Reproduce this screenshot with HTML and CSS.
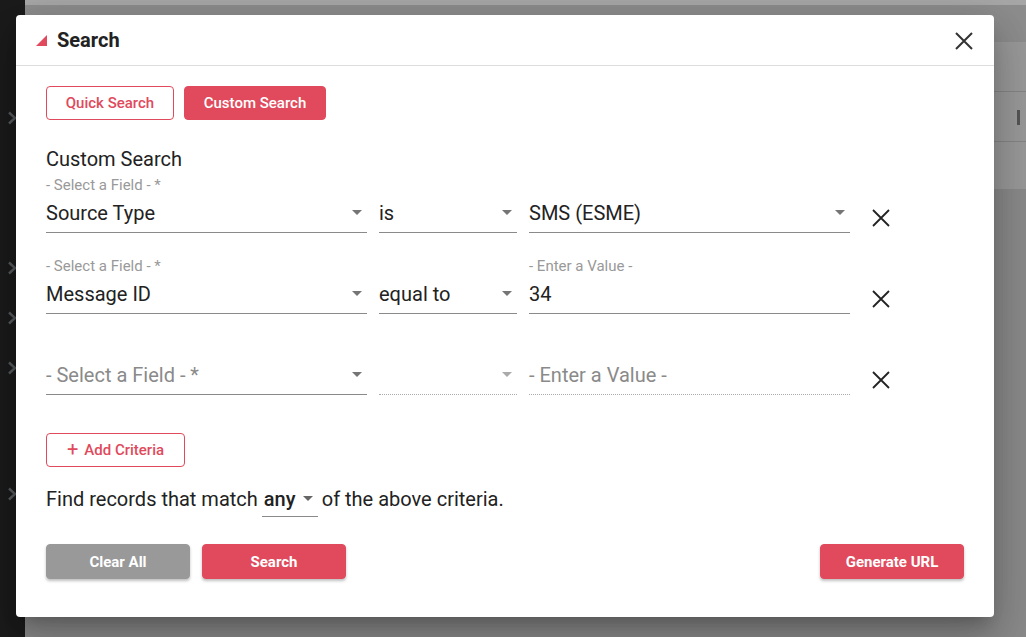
FILE: index.html
```html
<!DOCTYPE html>
<html lang="en">
<head>
<meta charset="utf-8">
<title>Search</title>
<link rel="stylesheet" href="styles.css">
</head>
<body>
<div class="app">
  <nav class="sidebar">
    <svg class="chev c1" width="10" height="14" viewBox="0 0 10 14"><polyline points="2,1.5 8,7 2,12.5" fill="none" stroke="#565b5f" stroke-width="2.4"/></svg>
    <svg class="chev c2" width="10" height="14" viewBox="0 0 10 14"><polyline points="2,1.5 8,7 2,12.5" fill="none" stroke="#565b5f" stroke-width="2.4"/></svg>
    <svg class="chev c3" width="10" height="14" viewBox="0 0 10 14"><polyline points="2,1.5 8,7 2,12.5" fill="none" stroke="#565b5f" stroke-width="2.4"/></svg>
    <svg class="chev c4" width="10" height="14" viewBox="0 0 10 14"><polyline points="2,1.5 8,7 2,12.5" fill="none" stroke="#565b5f" stroke-width="2.4"/></svg>
    <svg class="chev c5" width="10" height="14" viewBox="0 0 10 14"><polyline points="2,1.5 8,7 2,12.5" fill="none" stroke="#565b5f" stroke-width="2.4"/></svg>
  </nav>
  <main class="page">
    <div class="strip"></div>
    <div class="topbar"></div>
    <div class="band"></div>
    <div class="band band-tool"><span class="first-icon"></span></div>
    <div class="band band-last"></div>
    <div class="rest"></div>
  </main>
</div>

<div class="modal" role="dialog" aria-label="Search">
  <header class="modal-head">
    <span class="corner"></span>
    <h1 class="modal-title">Search</h1>
    <button class="close" aria-label="Close">
      <svg width="20" height="20" viewBox="0 0 20 20"><path d="M2 2 L18 18 M18 2 L2 18" stroke="#333" stroke-width="2" fill="none"/></svg>
    </button>
  </header>
  <section class="modal-body">
    <div class="tabs">
      <button class="btn btn-outline">Quick Search</button>
      <button class="btn btn-fill">Custom Search</button>
    </div>
    <h2 class="section-title">Custom Search</h2>

    <div class="criteria">
      <div class="field">
        <label class="lbl">- Select a Field - *</label>
        <div class="input select"><span class="val">Source Type</span><span class="caret"></span></div>
      </div>
      <div class="field">
        <label class="lbl">&nbsp;</label>
        <div class="input select"><span class="val">is</span><span class="caret"></span></div>
      </div>
      <div class="field">
        <label class="lbl">&nbsp;</label>
        <div class="input select"><span class="val">SMS (ESME)</span><span class="caret"></span></div>
      </div>
      <div class="remove"><svg width="20" height="20" viewBox="0 0 20 20"><path d="M2 2 L18 18 M18 2 L2 18" stroke="#222" stroke-width="1.8" fill="none"/></svg></div>

      <div class="field">
        <label class="lbl">- Select a Field - *</label>
        <div class="input select"><span class="val">Message ID</span><span class="caret"></span></div>
      </div>
      <div class="field">
        <label class="lbl">&nbsp;</label>
        <div class="input select"><span class="val">equal to</span><span class="caret"></span></div>
      </div>
      <div class="field">
        <label class="lbl">- Enter a Value -</label>
        <div class="input"><span class="val">34</span></div>
      </div>
      <div class="remove"><svg width="20" height="20" viewBox="0 0 20 20"><path d="M2 2 L18 18 M18 2 L2 18" stroke="#222" stroke-width="1.8" fill="none"/></svg></div>

      <div class="field">
        <label class="lbl">&nbsp;</label>
        <div class="input select"><span class="val ph">- Select a Field - *</span><span class="caret"></span></div>
      </div>
      <div class="field">
        <label class="lbl">&nbsp;</label>
        <div class="input select dotted"><span class="val"></span><span class="caret light"></span></div>
      </div>
      <div class="field">
        <label class="lbl">&nbsp;</label>
        <div class="input dotted"><span class="val ph">- Enter a Value -</span></div>
      </div>
      <div class="remove"><svg width="20" height="20" viewBox="0 0 20 20"><path d="M2 2 L18 18 M18 2 L2 18" stroke="#222" stroke-width="1.8" fill="none"/></svg></div>
    </div>

    <button class="btn btn-outline btn-add"><span class="plus">+</span>Add Criteria</button>

    <p class="match">Find records that match <span class="any"><span class="any-val">any</span><span class="caret"></span></span> of the above criteria.</p>

    <div class="actions">
      <button class="btn btn-gray raised">Clear All</button>
      <button class="btn btn-fill raised">Search</button>
      <span class="spacer"></span>
      <button class="btn btn-fill raised">Generate URL</button>
    </div>
  </section>
</div>
</body>
</html>
```
FILE: styles.css
```css
* { box-sizing: border-box; }
html, body { margin: 0; padding: 0; }
body {
  width: 1026px;
  height: 637px;
  overflow: hidden;
  font-family: Roboto, "Liberation Sans", Arial, sans-serif;
  color: #222;
  position: relative;
  background: #8b8b8b;
}
.app { display: flex; height: 637px; }
.sidebar {
  width: 25px;
  flex: none;
  background: #1b1b1b;
  display: flex;
  flex-direction: column;
}
.chev {
  display: block;
  flex: none;
  margin-left: 7px;
}
.c1 { margin-top: 111px; }
.c2 { margin-top: 136px; }
.c3 { margin-top: 36px; }
.c4 { margin-top: 36px; }
.c5 { margin-top: 112px; }

.page { flex: 1; display: flex; flex-direction: column; }
.strip { height: 5px; background: #a7a7a7; }
.topbar { height: 37px; background: #8d8d8d; }
.band { height: 50px; background: #999; border-bottom: 1px solid #858585; position: relative; }
.band-last { height: 47px; border-bottom: 0; }
.first-icon {
  position: absolute;
  right: 6px;
  top: 18px;
  width: 3px;
  height: 15px;
  background: #555;
}
.rest { flex: 1; background: #8a8a8a; }

.modal {
  position: absolute;
  left: 16px;
  top: 15px;
  width: 978px;
  height: 602px;
  background: #fff;
  border-radius: 4px;
  box-shadow: 0 11px 15px -7px rgba(0,0,0,.2), 0 24px 38px 3px rgba(0,0,0,.14), 0 9px 46px 8px rgba(0,0,0,.12);
  display: flex;
  flex-direction: column;
}
.modal-head {
  height: 51px;
  border-bottom: 1px solid #dedede;
  display: flex;
  align-items: center;
  padding: 0 20px 0 20px;
  flex: none;
}
.corner {
  width: 0; height: 0;
  border-left: 11px solid transparent;
  border-bottom: 11px solid #e04a5c;
  margin-top: 1px;
}
.modal-title {
  margin: 0 0 0 10px;
  font-size: 20px;
  font-weight: 700;
  color: #222;
  line-height: 24px;
}
.close {
  margin-left: auto;
  background: none;
  border: 0;
  padding: 0;
  width: 20px;
  height: 20px;
  margin-right: 0;
  display: flex;
  margin-top: 2px;
}
.modal-body {
  padding: 20px 30px 0 30px;
  display: flex;
  flex-direction: column;
  align-items: flex-start;
}
.tabs { display: flex; gap: 10px; }
.btn {
  font-family: Roboto, "Liberation Sans", Arial, sans-serif;
  font-size: 15px;
  font-weight: 500;
  height: 34px;
  border-radius: 4px;
  padding: 0;
  cursor: pointer;
  line-height: 32px;
  text-align: center;
}
.btn-outline { background: #fff; border: 1px solid #e04a5c; color: #e04a5c; }
.btn-fill { background: #e04a5c; border: 1px solid #e04a5c; color: #fff; }
.btn-gray { background: #999; border: 1px solid #999; color: #fff; }
.tabs .btn-outline { width: 128px; }
.tabs .btn-fill { width: 142px; }

.section-title {
  margin: 27px 0 0 0;
  font-size: 20px;
  font-weight: 400;
  line-height: 24px;
  color: #222;
}
.criteria {
  display: grid;
  grid-template-columns: 321px 138px 321px 40px;
  column-gap: 12px;
  row-gap: 25px;
  margin-top: 6px;
  width: 100%;
}
.field { display: flex; flex-direction: column; }
.lbl {
  font-size: 15px;
  line-height: 16px;
  height: 16px;
  color: #999;
}
.input {
  height: 40px;
  border-bottom: 1px solid #8a8a8a;
  display: flex;
  align-items: center;
}
.input.dotted { border-bottom: 1px dotted #aaa; }
.val { font-size: 20px; line-height: 24px; color: #222; flex: 1; }
.val.ph { color: #8a8a8a; }
.caret {
  width: 0; height: 0;
  border-left: 5px solid transparent;
  border-right: 5px solid transparent;
  border-top: 5px solid #757575;
  margin-right: 5px;
}
.caret.light { border-top-color: #aaa; }
.remove {
  display: flex;
  align-items: center;
  justify-content: flex-start;
  padding-top: 26px;
  padding-left: 9px;
}
.remove svg { width: 20px; height: 20px; }

.btn-add { margin-top: 38px; width: 139px; display: flex; align-items: center; justify-content: center; }
.plus { font-size: 20px; font-weight: 400; margin-right: 6px; line-height: 20px; margin-top: -2px; }

.match {
  margin: 14px 0 0 0;
  font-size: 20px;
  line-height: 36px;
  color: #222;
  display: flex;
  align-items: center;
  white-space: pre;
}
.any {
  display: inline-flex;
  align-items: center;
  width: 56px;
  height: 36px;
  border-bottom: 1px solid #8a8a8a;
  padding-left: 2px;
  margin: 0 -1px 0 -1px;
}
.any-val { flex: 1; font-weight: 500; }
.any .caret { margin-right: 5px; border-top-color: #666; }

.actions {
  display: flex;
  width: 100%;
  gap: 12px;
  margin-top: 27px;
}
.actions .btn { width: 144px; height: 35px; font-weight: 700; }
.raised { box-shadow: 0 2px 3px rgba(0,0,0,.25); }
.spacer { flex: 1; }
```
